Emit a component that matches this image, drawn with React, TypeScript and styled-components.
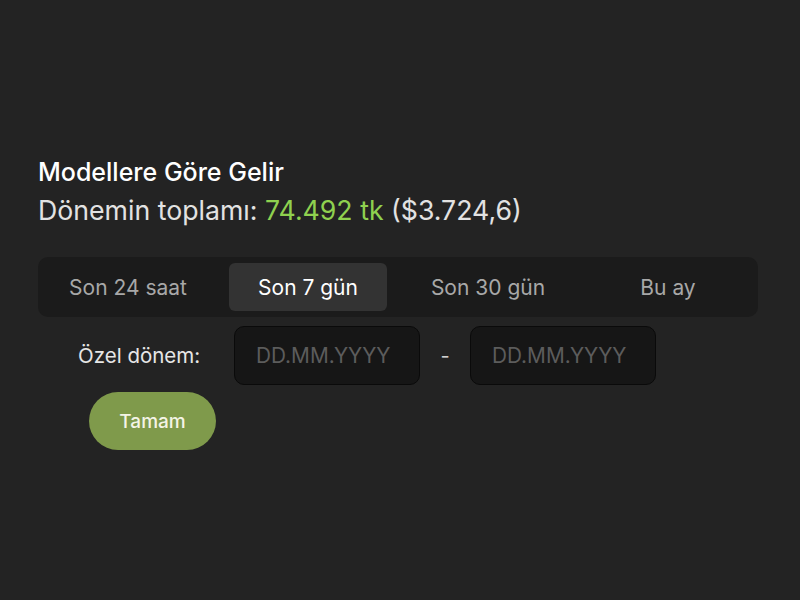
import styled, { createGlobalStyle } from "styled-components";

const GlobalStyle = createGlobalStyle`
  html, body {
    margin: 0;
    padding: 0;
    background: #232323;
  }
  body {
    font-family: Inter, "Noto Sans", "DejaVu Sans", sans-serif;
    color: #e6e6e6;
  }
`;

const Page = styled.div`
  width: 800px;
  height: 600px;
  box-sizing: border-box;
  padding: 157px 42px 0 38px;
`;

const Title = styled.h2`
  margin: 0;
  font-size: 25px;
  font-weight: 500;
  line-height: 30px;
  color: #ffffff;
`;

const Total = styled.div`
  margin-top: 7px;
  font-size: 26.7px;
  line-height: 32px;
  color: #e2e2e2;
`;

const Amount = styled.span`
  color: #8fd14f;
`;

const Tabs = styled.div`
  margin-top: 31px;
  display: grid;
  grid-template-columns: repeat(4, 1fr);
  padding: 6px 0;
  background: #1b1b1b;
  border-radius: 10px;
`;

const Tab = styled.button<{ $active?: boolean }>`
  margin: 0 11px;
  height: 48px;
  border: none;
  border-radius: 6px;
  background: ${(p) => (p.$active ? "#333333" : "transparent")};
  color: ${(p) => (p.$active ? "#ffffff" : "#a8a8a8")};
  font-family: inherit;
  font-size: 21px;
  cursor: pointer;
`;

const CustomRow = styled.div`
  margin-top: 9px;
  display: flex;
  align-items: center;
`;

const Label = styled.span`
  margin-left: 40px;
  width: 156px;
  font-size: 20.5px;
  color: #e6e6e6;
`;

const DateInput = styled.input`
  width: 186px;
  height: 59px;
  box-sizing: border-box;
  padding: 0 21px;
  background: #161616;
  border: 1px solid #0a0a0a;
  border-radius: 10px;
  color: #e6e6e6;
  font-family: inherit;
  font-size: 20.8px;
  outline: none;

  &::placeholder {
    color: #5c5c5c;
  }
`;

const Dash = styled.span`
  width: 50px;
  text-align: center;
  font-size: 20px;
  color: #d0d0d0;
`;

const Confirm = styled.button`
  margin: 7px 0 0 51px;
  width: 127px;
  height: 58px;
  border: none;
  border-radius: 29px;
  background: #7f9a4b;
  color: #f4f4e6;
  font-family: inherit;
  font-size: 19px;
  font-weight: 500;
  cursor: pointer;
`;

const periods = ["Son 24 saat", "Son 7 gün", "Son 30 gün", "Bu ay"];

export default function App() {
  return (
    <>
      <GlobalStyle />
      <Page>
        <Title>Modellere Göre Gelir</Title>
        <Total>
          Dönemin toplamı: <Amount>74.492 tk</Amount> ($3.724,6)
        </Total>
        <Tabs>
          {periods.map((p) => (
            <Tab key={p} $active={p === "Son 7 gün"}>
              {p}
            </Tab>
          ))}
        </Tabs>
        <CustomRow>
          <Label>Özel dönem:</Label>
          <DateInput placeholder="DD.MM.YYYY" />
          <Dash>-</Dash>
          <DateInput placeholder="DD.MM.YYYY" />
        </CustomRow>
        <Confirm>Tamam</Confirm>
      </Page>
    </>
  );
}
